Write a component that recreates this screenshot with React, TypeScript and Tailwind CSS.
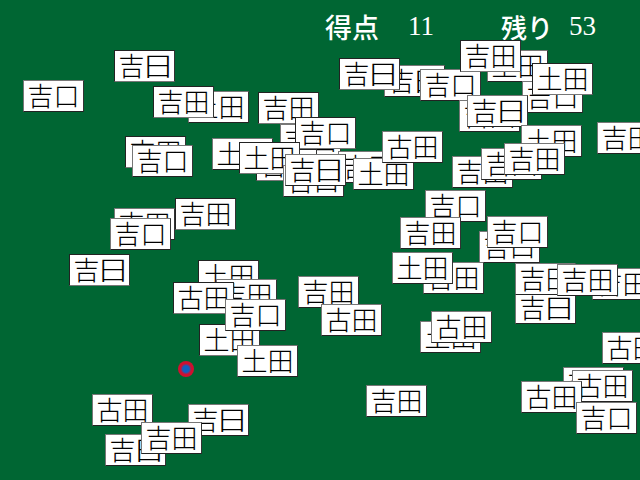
type Card = { x: number; y: number; label: string; dark?: boolean };

// bottom to top, same order as they stack in the picture
const cards: Card[] = [
  { x: 23, y: 80, label: "吉口" },
  { x: 114, y: 50, label: "吉日", dark: true },
  { x: 188, y: 91, label: "土田" },
  { x: 153, y: 86, label: "吉田", dark: true },
  { x: 125, y: 136, label: "吉田", dark: true },
  { x: 132, y: 145, label: "吉口" },
  { x: 258, y: 92, label: "吉田", dark: true },
  { x: 212, y: 138, label: "土田" },
  { x: 280, y: 124, label: "吉田" },
  { x: 256, y: 149, label: "吉田", dark: true },
  { x: 295, y: 117, label: "吉口", dark: true },
  { x: 239, y: 142, label: "土田", dark: true },
  { x: 283, y: 165, label: "吉口" },
  { x: 338, y: 151, label: "吉田" },
  { x: 285, y: 154, label: "吉日" },
  { x: 353, y: 158, label: "土田" },
  { x: 382, y: 131, label: "古田" },
  { x: 384, y: 65, label: "吉日" },
  { x: 339, y: 58, label: "吉日", dark: true },
  { x: 420, y: 69, label: "吉口" },
  { x: 487, y: 50, label: "土田" },
  { x: 460, y: 40, label: "吉田", dark: true },
  { x: 522, y: 81, label: "吉口" },
  { x: 532, y: 63, label: "土田", dark: true },
  { x: 459, y: 100, label: "吉田" },
  { x: 467, y: 95, label: "吉日" },
  { x: 521, y: 125, label: "土田" },
  { x: 597, y: 122, label: "吉田" },
  { x: 452, y: 156, label: "吉田" },
  { x: 481, y: 148, label: "吉田" },
  { x: 504, y: 143, label: "吉田" },
  { x: 114, y: 208, label: "吉田" },
  { x: 175, y: 198, label: "吉田", dark: true },
  { x: 110, y: 218, label: "吉口" },
  { x: 69, y: 254, label: "吉日", dark: true },
  { x: 198, y: 260, label: "土田", dark: true },
  { x: 216, y: 279, label: "吉田" },
  { x: 173, y: 282, label: "古田", dark: true },
  { x: 199, y: 324, label: "土田", dark: true },
  { x: 225, y: 299, label: "吉口" },
  { x: 237, y: 345, label: "土田" },
  { x: 298, y: 276, label: "吉田" },
  { x: 321, y: 304, label: "古田" },
  { x: 425, y: 190, label: "吉口" },
  { x: 400, y: 217, label: "吉田" },
  { x: 479, y: 231, label: "吉口" },
  { x: 487, y: 216, label: "吉口" },
  { x: 423, y: 262, label: "吉田" },
  { x: 392, y: 252, label: "土田" },
  { x: 515, y: 292, label: "吉日" },
  { x: 515, y: 263, label: "吉田" },
  { x: 592, y: 268, label: "吉田" },
  { x: 557, y: 264, label: "吉田" },
  { x: 420, y: 321, label: "土田" },
  { x: 431, y: 311, label: "古田" },
  { x: 602, y: 332, label: "古田" },
  { x: 366, y: 385, label: "吉田" },
  { x: 563, y: 367, label: "吉田" },
  { x: 572, y: 370, label: "古田" },
  { x: 521, y: 381, label: "古田" },
  { x: 576, y: 402, label: "吉口" },
  { x: 92, y: 394, label: "古田" },
  { x: 188, y: 404, label: "吉日" },
  { x: 105, y: 434, label: "吉日" },
  { x: 141, y: 422, label: "吉田" },
];

const Tile = ({ x, y, label, dark }: Card) => (
  <div
    className={`absolute flex h-[32px] w-[61px] items-center justify-center border bg-white pb-[2px] text-[26px] font-light leading-none text-black ${
      dark
        ? "border-t-[#222] border-l-[#222] border-r-[#333] border-b-[#777]"
        : "border-t-[#777] border-l-[#777] border-r-[#333] border-b-[#222]"
    }`}
    style={{ left: x, top: y, fontFamily: '"Noto Sans CJK JP", sans-serif' }}
  >
    <span>{label[0]}</span>
    {/* 日 sits wide in the picture, the CJK font draws it narrow */}
    <span className={label[1] === "日" ? "inline-block scale-x-[1.3]" : "inline-block"}>{label[1]}</span>
  </div>
);

export default function App() {
  return (
    <div className="relative h-[480px] w-[640px] overflow-hidden bg-[#006633]">
      <div className="flex h-[53px] items-center pl-[325px] text-white">
        <span className="w-[83px] font-['Noto_Sans_CJK_JP',sans-serif] text-[27px] font-medium leading-none">得点</span>
        <span className="w-[93px] font-['Liberation_Serif',serif] text-[27px] leading-none">11</span>
        <span className="w-[68px] font-['Noto_Sans_CJK_JP',sans-serif] text-[26px] font-medium leading-none">残り</span>
        <span className="font-['Liberation_Serif',serif] text-[27px] leading-none">53</span>
      </div>

      {cards.map((card, i) => (
        <Tile key={i} {...card} />
      ))}

      {/* cursor dot */}
      <div className="absolute left-[178px] top-[361px] h-[16px] w-[16px] rounded-full bg-[radial-gradient(circle,#1060c0_0%,#1060c0_28%,#d01030_48%,#d01030_75%,#00663300_100%)]" />
    </div>
  );
}
